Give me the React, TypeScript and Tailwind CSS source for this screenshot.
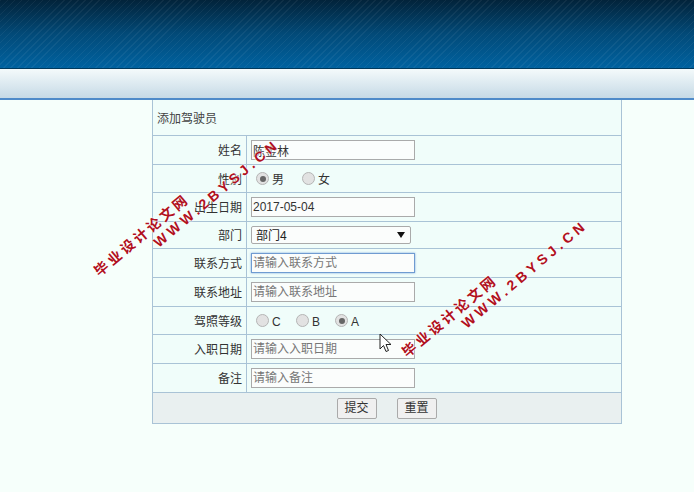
const font = { fontFamily: '"Liberation Sans","Noto Sans CJK SC",sans-serif' };

function Row({ label, h, children }: { label: string; h: string; children: React.ReactNode }) {
  return (
    <div className={`flex border-t border-[#a9c3d6] ${h}`}>
      <div className="w-[94px] shrink-0 border-r border-[#a9c3d6] flex items-center justify-end pr-[4px] pt-[2px] text-[12px] text-[#333]">{label}</div>
      <div className="flex-1 flex items-center pl-[4px]">{children}</div>
    </div>
  );
}

function Field({ value, placeholder, focus }: { value?: string; placeholder?: string; focus?: boolean }) {
  return (
    <input
      readOnly
      value={value}
      placeholder={placeholder}
      className={`w-[164px] h-[20px] px-[1px] text-[12px] text-[#333] placeholder:text-[#777] bg-[#fbfdfc] border ${focus ? "border-[#6f9bd1] shadow-[0_0_2px_#7aa7e0]" : "border-[#aaaaaa]"} outline-none`}
    />
  );
}

function Radio({ label, on, w }: { label: string; on?: boolean; w: string }) {
  return (
    <span className={`flex items-center gap-[3px] ${w} text-[12px] text-[#333]`}>
      <span className="w-[13px] h-[13px] rounded-full border border-[#b5b5b5] bg-[#e2e2e2] flex items-center justify-center">
        {on && <span className="w-[6px] h-[6px] rounded-full bg-[#666]" />}
      </span>
      <span className="mt-[3px]">{label}</span>
    </span>
  );
}

function Mark({ left, top }: { left: number; top: number }) {
  return (
    <div className="absolute origin-top-left -rotate-[40deg] text-[#b01020] font-bold leading-[17px] pointer-events-none [text-shadow:0_0_2px_#ffffff,0_0_2px_#ffffff]" style={{ left, top }}>
      <div className="text-[14px] tracking-[3px] whitespace-nowrap">毕业设计论文网</div>
      <div className="text-[14px] tracking-[4px] whitespace-nowrap ml-[64px] -mt-[1px]">WWW.2BYSJ.CN</div>
    </div>
  );
}

export default function App() {
  return (
    <div className="relative w-[694px] h-[492px] overflow-hidden bg-[#f6fffb]" style={font}>
      <div className="h-[69px] bg-[repeating-linear-gradient(135deg,rgba(255,255,255,0.05)_0px,rgba(255,255,255,0.05)_1px,transparent_1px,transparent_5px),linear-gradient(to_bottom,#02233a_0%,#024a78_50%,#0062a0_100%)] border-b border-[#013a5e]" />
      <div className="h-[31px] bg-[linear-gradient(to_bottom,#f4fafb,#c6dae6)] border-b-2 border-[#4f8bc9]" />
      <div className="ml-[152px] w-[470px] border-x border-b border-[#a9c3d6] bg-[#f0fdfa]">
        <div className="h-[35px] flex items-center pl-[4px] pt-[2px] text-[12px] text-[#444]">添加驾驶员</div>
        <Row label="姓名" h="h-[29px]"><Field value="陈金林" /></Row>
        <Row label="性别" h="h-[28px]">
          <div className="flex pl-[5px]"><Radio label="男" on w="w-[46px]" /><Radio label="女" w="w-[40px]" /></div>
        </Row>
        <Row label="出生日期" h="h-[29px]"><Field value="2017-05-04" /></Row>
        <Row label="部门" h="h-[27px]">
          <div className="w-[160px] h-[18px] border border-[#aaaaaa] rounded-[2px] flex items-center justify-between pl-[4px] pr-[5px] text-[12px] text-[#222] bg-[#fbfdfc]">
            <span className="pt-[1px]">部门4</span>
            <svg width="8" height="6" viewBox="0 0 8 6"><path d="M0 0h8L4 6z" fill="#111" /></svg>
          </div>
        </Row>
        <Row label="联系方式" h="h-[29px]"><Field placeholder="请输入联系方式" focus /></Row>
        <Row label="联系地址" h="h-[29px]"><Field placeholder="请输入联系地址" /></Row>
        <Row label="驾照等级" h="h-[28px]">
          <div className="flex pl-[5px]"><Radio label="C" w="w-[40px]" /><Radio label="B" w="w-[39px]" /><Radio label="A" on w="w-[40px]" /></div>
        </Row>
        <Row label="入职日期" h="h-[29px]"><Field placeholder="请输入入职日期" /></Row>
        <Row label="备注" h="h-[29px]"><Field placeholder="请输入备注" /></Row>
        <div className="h-[31px] border-t border-[#a9c3d6] bg-[#e9f0f0] flex items-center justify-center gap-[20px] pr-[1px]">
          <button className="w-[40px] h-[21px] border border-[#aaa] rounded-[2px] bg-[#f0f0f0] text-[12px] text-[#333]">提交</button>
          <button className="w-[40px] h-[21px] border border-[#aaa] rounded-[2px] bg-[#f0f0f0] text-[12px] text-[#333]">重置</button>
        </div>
      </div>
      <Mark left={91} top={267} />
      <Mark left={399} top={348} />
      <svg className="absolute left-[379px] top-[333px]" width="13" height="21" viewBox="0 0 13 21">
        <path d="M1 1v15l3.500-3.500 2.500 6 2.500-1-2.500-6h5z" fill="#fff" stroke="#222" strokeWidth="1" />
      </svg>
    </div>
  );
}
